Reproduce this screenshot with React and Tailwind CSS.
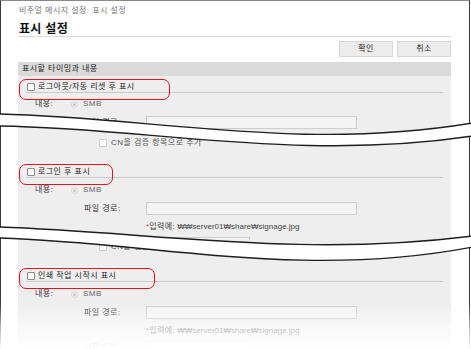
import React from 'react';

const FONT = "font-['Liberation_Sans','Noto_Sans_CJK_KR',sans-serif]";

function Checkbox({ dim }) {
  return (
    <span
      className={
        dim
          ? 'block w-[8px] h-[8px] shrink-0 rounded-[1px] border border-[#cfcfcf] bg-white'
          : 'block w-[8px] h-[8px] shrink-0 rounded-[1px] border border-[#8a8a8a] bg-white'
      }
    />
  );
}

function Radio() {
  return (
    <span className="flex w-[7px] h-[7px] shrink-0 items-center justify-center rounded-full border border-[#d2d2d2] bg-[#f5f5f5]">
      <span className="w-[3px] h-[3px] rounded-full bg-[#c9c9c9]" />
    </span>
  );
}

// label row with the red highlight round it
function SectionLabel({ text, box, className }) {
  return (
    <div className={`relative mx-[8px] h-[12px] border-b border-[#c9c9c9] flex items-center ${className}`}>
      <span className="ml-[1px]">
        <Checkbox />
      </span>
      <span className="ml-[3px] text-[8px] text-[#222]">{text}</span>
      <div className={`absolute left-[-7px] top-[-2px] h-[21px] rounded-[7px] border-[1.5px] border-[#e8101e] ${box}`} />
    </div>
  );
}

function ContentRow({ className }) {
  return (
    <div className={`h-[12px] flex items-center pl-[17px] text-[8px] ${className}`}>
      <span className="w-[36px] text-[#333]">내용:</span>
      <Radio />
      <span className="ml-[5px] text-[#666]">SMB</span>
    </div>
  );
}

function PathRow() {
  return (
    <div className="mt-[6px] h-[13px] flex items-center pl-[66px] text-[8px]">
      <span className="w-[62px] text-[#333]">파일 경로:</span>
      <div className="w-[211px] h-[13px] border border-[#cdcdcd] bg-[#f4f4f4]" />
    </div>
  );
}

function ExampleRow() {
  return (
    <div className="mt-[7px] h-[10px] flex items-center pl-[128px] text-[8px] text-[#444] tracking-normal">
      <span className="text-[#d84040]">*</span>
      <span className="tracking-[0.45px]">입력예:</span>
      <span className="ml-[2px]">₩₩server01₩share₩signage.jpg</span>
    </div>
  );
}

function UserRow({ label }) {
  return (
    <div className="mt-[5px] h-[13px] flex items-center pl-[66px] text-[8px]">
      <span className="w-[62px] text-[#333]">{label}</span>
      <div className="w-[104px] h-[13px] border border-[#cdcdcd] bg-[#f4f4f4]" />
    </div>
  );
}

function CnRow() {
  return (
    <div className="h-[10px] flex items-center pl-[81px] text-[8px] text-[#555]">
      <Checkbox dim />
      <span className="ml-[4px]">CN을 검증 항목으로 추가</span>
    </div>
  );
}

function Tear({ top, bottom }) {
  const [a, b, c, d] = top;
  const [e, f, g, h] = bottom;
  const topPath = `M-2,${a} C150,${b} 300,${c} 473,${d}`;
  const bottomPath = `M-2,${e} C150,${f} 300,${g} 473,${h}`;
  const band = `${topPath} L473,${h} C300,${g} 150,${f} -2,${e} Z`;
  return (
    <g>
      <path d={band} fill="#ffffff" />
      <path d={topPath} fill="none" stroke="#1e1e1e" strokeWidth="1.4" />
      <path d={bottomPath} fill="none" stroke="#1e1e1e" strokeWidth="1.4" />
    </g>
  );
}

export default function App() {
  return (
    <div className={`relative w-[471px] h-[349px] overflow-hidden bg-white tracking-[0.45px] ${FONT}`}>
      <div className="w-[470px] h-full flex flex-col">
        {/* piece 1: header and first option */}
        <div className="h-[130px] shrink-0 overflow-hidden border-x border-t border-x-[#3a3a3a] border-t-[#8a8a8a] flex flex-col pl-[17px] pr-[18px]">
          <div className="mt-[4px] h-[12px] flex items-center pl-[1px] text-[8px] text-[#777]">
            비주얼 메시지 설정: 표시 설정
          </div>
          <div className="mt-[5px] h-[15px] border-b border-[#d8d8d8] flex items-center pl-[1px] text-[12px] font-bold text-[#111] tracking-[0.3px]">
            표시 설정
          </div>
          <div className="mt-[4px] flex justify-end gap-[4px]">
            <button className="w-[54px] h-[16px] border border-[#d6d6d6] bg-[#ececec] text-[8px] text-[#222] flex items-center justify-center">
              확인
            </button>
            <button className="w-[54px] h-[16px] border border-[#d6d6d6] bg-[#ececec] text-[8px] text-[#222] flex items-center justify-center">
              취소
            </button>
          </div>
          <div className="mt-[5px] h-[14px] shrink-0 bg-[#dadada] flex items-center pl-[4px] text-[8px] text-[#222]">
            표시할 타이밍과 내용
          </div>
          <div className="flex-1 bg-[#eeeeee] pt-[5px] flex flex-col">
            <SectionLabel text="로그아웃/자동 리셋 후 표시" box="w-[151px]" />
            <ContentRow className="mt-[5px]" />
            <PathRow />
          </div>
        </div>

        {/* piece 2 */}
        <div className="h-[110px] shrink-0 overflow-hidden border-x border-[#3a3a3a] flex flex-col pl-[17px] pr-[18px]">
          <div className="flex-1 bg-[#eeeeee] pt-[8px] flex flex-col">
            <CnRow />
            <SectionLabel text="로그인 후 표시" box="w-[94px]" className="mt-[18px]" />
            <ContentRow className="mt-[6px]" />
            <PathRow />
            <ExampleRow />
            <UserRow label="" />
          </div>
        </div>

        {/* piece 3 */}
        <div className="flex-1 overflow-hidden border-x border-[#3a3a3a] flex flex-col pl-[17px] pr-[18px]">
          <div className="flex-1 bg-[#eeeeee] pt-[2px] flex flex-col">
            <CnRow />
            <SectionLabel text="인쇄 작업 시작시 표시" box="w-[136px]" className="mt-[18px]" />
            <ContentRow className="mt-[6px]" />
            <PathRow />
            <ExampleRow />
            <UserRow label="사용자명:" />
          </div>
        </div>
      </div>

      <svg className="absolute inset-0 pointer-events-none" width="471" height="349" viewBox="0 0 471 349">
        <Tear top={[114, 117, 152, 123]} bottom={[126, 128, 162, 136]} />
        <Tear top={[227, 232, 258, 236]} bottom={[238, 242, 280, 247]} />
      </svg>

      <div className="absolute left-0 right-0 bottom-0 h-[46px] bg-linear-to-b from-white/0 via-white/60 to-white pointer-events-none" />
    </div>
  );
}
